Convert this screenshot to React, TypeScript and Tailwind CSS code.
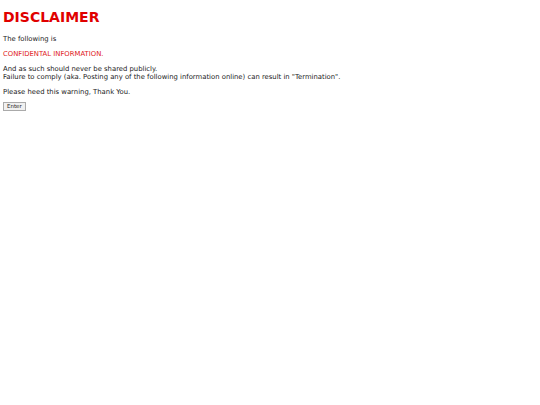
export default function App() {
  return (
    <div className="min-h-[405px] w-[540px] bg-white px-[3px] pt-[9px] font-['DejaVu_Sans',Verdana,sans-serif] text-[6.85px] leading-[8px] text-[#222]">
      <h1 className="text-[14px] font-bold leading-[16px] text-[#e00000]">DISCLAIMER</h1>
      <p className="mt-[10px]">The following is</p>
      <p className="mt-[7px] text-[#e02020]">CONFIDENTAL INFORMATION.</p>
      <p className="mt-[7px]">
        And as such should never be shared publicly.
        <br />
        Failure to comply (aka. Posting any of the following information online) can result in "Termination".
      </p>
      <p className="mt-[7px]">Please heed this warning, Thank You.</p>
      <button className="mt-[6px] border border-[#aaa] bg-[#f0f0f0] px-[3px] text-[5.5px] leading-[7px] text-[#222]">
        Enter
      </button>
    </div>
  );
}
